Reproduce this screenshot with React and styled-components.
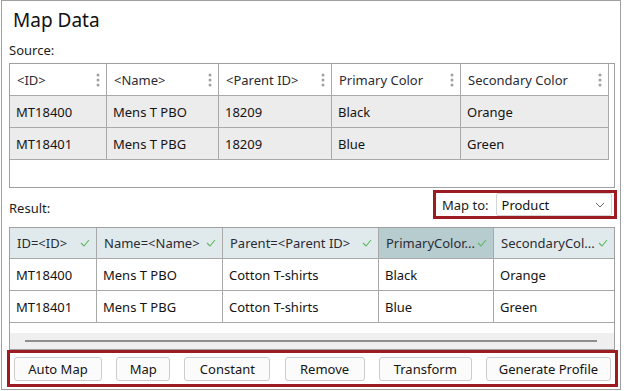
import React from 'react';
import styled, { createGlobalStyle } from 'styled-components';

const GlobalStyle = createGlobalStyle`
  html, body {
    margin: 0;
    padding: 0;
    background: #ffffff;
  }
  body {
    font-family: "Noto Sans", "Liberation Sans", sans-serif;
    font-size: 13px;
    color: #1c1c1c;
  }
  * { box-sizing: border-box; }
`;

const RED = '#9d1c24';
const LINE = '#a9a9a9';

const Page = styled.div`
  width: 626px;
  height: 391px;
  padding-left: 1px;
`;

const Frame = styled.div`
  width: 620px;
  height: 390px;
  border: 1px solid #a0a0a0;
  padding: 0 5px 0 7px;
  display: flex;
  flex-direction: column;
`;

const Title = styled.h1`
  margin: 0;
  padding: 6px 0 0 4px;
  font-size: 19px;
  line-height: 26px;
  font-weight: normal;
  color: #111;
`;

const Label = styled.div`
  font-size: 13px;
  line-height: 16px;
  color: #1c1c1c;
  margin-top: ${p => p.$mt || 0}px;
  padding-bottom: ${p => p.$pb || 0}px;
`;

const Table = styled.div`
  border: 1px solid #a0a0a0;
  height: ${p => p.$h}px;
  margin-top: ${p => p.$mt || 0}px;
  display: flex;
  flex-direction: column;
  overflow: hidden;
`;

const Grid = styled.div`
  display: grid;
  grid-template-columns: ${p => p.$cols};
  width: ${p => p.$w}px;
`;

const HeadCell = styled.div`
  height: ${p => p.$h}px;
  display: flex;
  align-items: center;
  padding: 0 6px 0 7px;
  border-right: ${p => (p.$last ? 'none' : `1px solid ${LINE}`)};
  border-bottom: 1px solid ${LINE};
  background: ${p => p.$bg || '#ffffff'};
  color: #2b2b35;
  white-space: nowrap;
  gap: 4px;
`;

const HeadText = styled.span`
  flex: 1;
  min-width: 0;
`;

const Cell = styled.div`
  height: 32px;
  display: flex;
  align-items: center;
  padding-left: 6px;
  border-right: ${p => (p.$last ? 'none' : `1px solid ${LINE}`)};
  border-bottom: 1px solid ${LINE};
  background: ${p => p.$bg || '#ffffff'};
  white-space: nowrap;
  color: #141414;
`;

const Filler = styled.div`
  flex: 1;
`;

const ScrollTrack = styled.div`
  height: 16px;
  background: #efefef;
  display: flex;
  align-items: center;
  padding: 0 17px 0 15px;
`;

const ScrollThumb = styled.div`
  flex: 1;
  height: 2px;
  background: #8e8e8e;
`;

const MiddleRow = styled.div`
  display: flex;
  justify-content: space-between;
  align-items: flex-end;
  margin-top: 2px;
`;

const MapToBox = styled.div`
  width: 184px;
  height: 29px;
  border: 3px solid ${RED};
  margin-right: -2px;
  display: flex;
  align-items: center;
  padding: 0 2px 0 6px;
  gap: 7px;
`;

const Select = styled.div`
  flex: 1;
  height: 23px;
  border: 1px solid #d4d4d4;
  border-radius: 2px;
  background: #fff;
  display: flex;
  align-items: center;
  justify-content: space-between;
  padding: 0 6px 0 5px;
  color: #111;
`;

const ButtonBar = styled.div`
  margin: 0 -3px 0 -2px;
  height: 37px;
  border: 3px solid ${RED};
  display: flex;
  align-items: center;
  justify-content: space-between;
  padding: 1px 4px 0 4px;
`;

const Button = styled.button`
  width: ${p => p.$w}px;
  height: 24px;
  border: 1px solid #cdcdcd;
  border-radius: 3px;
  background: #fbfbfb;
  font-family: "Noto Sans", "Liberation Sans", sans-serif;
  font-size: 13px;
  color: #141414;
  padding: 0;
`;

const Kebab = () => (
  <svg width="4" height="14" viewBox="0 0 4 14">
    <circle cx="2" cy="2" r="1.5" fill="#a0a0a0" />
    <circle cx="2" cy="7" r="1.5" fill="#a0a0a0" />
    <circle cx="2" cy="12" r="1.5" fill="#a0a0a0" />
  </svg>
);

const Check = () => (
  <svg width="10" height="8" viewBox="0 0 10 8">
    <polyline points="1,4 4,7 9,1" fill="none" stroke="#5cb85c" strokeWidth="1.1" />
  </svg>
);

const Chevron = () => (
  <svg width="10" height="6" viewBox="0 0 10 6">
    <polyline points="1,1 5,5 9,1" fill="none" stroke="#666" strokeWidth="1" />
  </svg>
);

const sourceCols = ['<ID>', '<Name>', '<Parent ID>', 'Primary Color', 'Secondary Color'];
const sourceRows = [
  ['MT18400', 'Mens T PBO', '18209', 'Black', 'Orange'],
  ['MT18401', 'Mens T PBG', '18209', 'Blue', 'Green'],
];

const resultCols = ['ID=<ID>', 'Name=<Name>', 'Parent=<Parent ID>', 'PrimaryColor...', 'SecondaryCol...'];
const resultRows = [
  ['MT18400', 'Mens T PBO', 'Cotton T-shirts', 'Black', 'Orange'],
  ['MT18401', 'Mens T PBG', 'Cotton T-shirts', 'Blue', 'Green'],
];

const buttons = [
  ['Auto Map', 88],
  ['Map', 54],
  ['Constant', 86],
  ['Remove', 80],
  ['Transform', 93],
  ['Generate Profile', 125],
];

const App = () => {
  return (
    <Page>
      <GlobalStyle />
      <Frame>
        <Title>Map Data</Title>
        <Label $mt={9}>Source:</Label>
        <Table $h={125} $mt={5}>
          <Grid $cols="97px 112px 113px 129px 148px" $w={599}>
            {sourceCols.map(c => (
              <HeadCell key={c} $h={32}>
                <HeadText>{c}</HeadText>
                <Kebab />
              </HeadCell>
            ))}
            {sourceRows.map(r =>
              r.map((v, i) => (
                <Cell key={r[0] + i} $bg="#ececec">{v}</Cell>
              ))
            )}
          </Grid>
          <Filler />
        </Table>
        <MiddleRow>
          <Label $pb={3}>Result:</Label>
          <MapToBox>
            <span>Map to:</span>
            <Select>
              <span>Product</span>
              <Chevron />
            </Select>
          </MapToBox>
        </MiddleRow>
        <Table $h={123} $mt={8}>
          <Grid $cols="87px 126px 156px 115px 120px" $w={604}>
            {resultCols.map((c, i) => (
              <HeadCell key={c} $h={31} $last={i === 4} $bg={i === 3 ? '#b6cccf' : '#e0eaec'}>
                <HeadText>{c}</HeadText>
                <Check />
              </HeadCell>
            ))}
            {resultRows.map(r =>
              r.map((v, i) => (
                <Cell key={r[0] + i} $last={i === 4}>{v}</Cell>
              ))
            )}
          </Grid>
          <Filler />
          <ScrollTrack>
            <ScrollThumb />
          </ScrollTrack>
        </Table>
        <ButtonBar>
          {buttons.map(([t, w]) => (
            <Button key={t} $w={w}>{t}</Button>
          ))}
        </ButtonBar>
      </Frame>
    </Page>
  );
};

export default App;
